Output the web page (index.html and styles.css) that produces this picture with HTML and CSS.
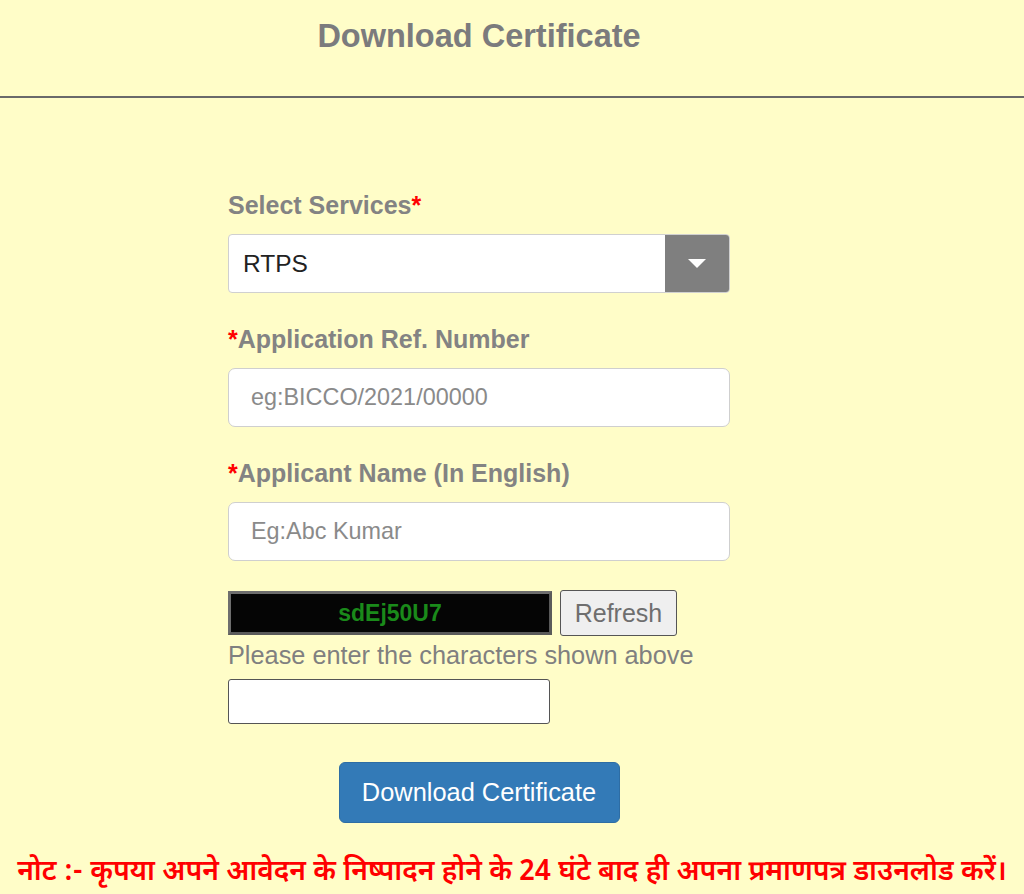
FILE: index.html
```html
<!DOCTYPE html>
<html lang="en">
<head>
  <meta charset="UTF-8" />
  <meta name="viewport" content="width=device-width, initial-scale=1.0"/>
  <title>Download Certificate</title>
  <link rel="stylesheet" href="styles.css">
</head>
<body>
  <div class="header">
    <h2 class="title">Download Certificate</h2>
  </div>

  <div class="page">
    <form class="form" onsubmit="return false;">
      <div class="field">
        <label class="label">Select Services<span class="req">*</span></label>
        <div class="select">
          <span class="select-value">RTPS</span>
          <span class="select-btn">
            <svg width="18" height="9" viewBox="0 0 18 9"><path d="M0 0 L18 0 L9 9 Z" fill="#fff"/></svg>
          </span>
        </div>
      </div>

      <div class="field">
        <label class="label"><span class="req">*</span>Application Ref. Number</label>
        <input class="input" type="text" placeholder="eg:BICCO/2021/00000" />
      </div>

      <div class="field last">
        <label class="label"><span class="req">*</span>Applicant Name (In English)</label>
        <input class="input" type="text" placeholder="Eg:Abc Kumar" />
      </div>

      <div class="captcha-row">
        <div class="captcha">sdEj50U7</div>
        <button type="button" class="refresh">Refresh</button>
      </div>
      <p class="hint">Please enter the characters shown above</p>
      <input class="captcha-input" type="text" />

      <div class="actions">
        <button type="submit" class="btn-primary">Download Certificate</button>
      </div>
    </form>
  </div>

  <p class="note">नोट :- कृपया अपने आवेदन के निष्पादन होने के 24 घंटे बाद ही अपना प्रमाणपत्र डाउनलोड करें।</p>
</body>
</html>
```

FILE: styles.css
```css
body {
  margin: 0;
  font-family: 'Liberation Sans', Arial, Helvetica, sans-serif;
  background-color: #fffdc8;
  color: #7d7d7d;
  height: 894px;
  overflow: hidden;
}
.header {
  height: 98px;
  width: 100%;
  border-bottom: 2px solid #6a6a6a;
  box-sizing: border-box;
}
.title {
  margin: 0;
  width: 958px;
  padding-top: 18px;
  text-align: center;
  font-size: 32.5px;
  font-weight: bold;
  color: #7b7b7d;
}
.page {
  width: 958px;
  display: flex;
  justify-content: center;
  padding-top: 93px;
}
.form {
  width: 502px;
  display: flex;
  flex-direction: column;
}
.field {
  display: flex;
  flex-direction: column;
  margin-bottom: 32px;
}
.field.last {
  margin-bottom: 29px;
}
.label {
  font-size: 25px;
  font-weight: bold;
  line-height: 28px;
  color: #838383;
  margin-bottom: 15px;
}
.req {
  color: #f00;
}
.select {
  display: flex;
  height: 59px;
  box-sizing: border-box;
  border: 1px solid #d0d0d0;
  border-radius: 4px;
  background: #fff;
  overflow: hidden;
}
.select-value {
  flex: 1;
  display: flex;
  align-items: center;
  padding-left: 14px;
  font-size: 24.5px;
  color: #222;
}
.select-btn {
  width: 64px;
  background: #7f7f7f;
  display: flex;
  align-items: center;
  justify-content: center;
}
.input {
  height: 59px;
  box-sizing: border-box;
  border: 1px solid #cfcfcf;
  border-radius: 7px;
  background: #fff;
  padding: 0 22px;
  font-family: inherit;
  font-size: 23.4px;
  color: #555;
}
.input::placeholder {
  color: #8a8a8a;
}
.captcha-row {
  display: flex;
  align-items: center;
  gap: 8px;
}
.captcha {
  width: 324px;
  height: 44px;
  box-sizing: border-box;
  background: #050505;
  border: 3px solid #5a5a5a;
  border-top-color: #6e6e6e;
  border-left-color: #6e6e6e;
  color: #1a8a1a;
  font-weight: bold;
  font-size: 23px;
  display: flex;
  align-items: center;
  justify-content: center;
}
.refresh {
  height: 46px;
  width: 117px;
  background: #efefef;
  border: 1px solid #555;
  border-radius: 3px;
  font-family: inherit;
  font-size: 25px;
  color: #6e6e6e;
  cursor: pointer;
}
.hint {
  margin: 5px 0 10px;
  font-size: 25.3px;
  line-height: 28px;
  color: #808080;
}
.captcha-input {
  width: 322px;
  height: 45px;
  box-sizing: border-box;
  border: 1px solid #555;
  border-radius: 3px;
  background: #fff;
}
.actions {
  display: flex;
  justify-content: center;
  margin-top: 38px;
}
.btn-primary {
  width: 281px;
  height: 61px;
  background: #337ab7;
  border: 1px solid #2e6da4;
  border-radius: 6px;
  color: #fff;
  font-family: inherit;
  font-size: 25.4px;
  cursor: pointer;
}
.note {
  margin: 33px 0 0;
  line-height: 36px;
  text-align: center;
  color: #ff0000;
  font-size: 28.2px;
  font-weight: 600;
  font-family: 'Noto Sans Devanagari', 'Noto Sans', 'Lohit Devanagari', sans-serif;
}
```
